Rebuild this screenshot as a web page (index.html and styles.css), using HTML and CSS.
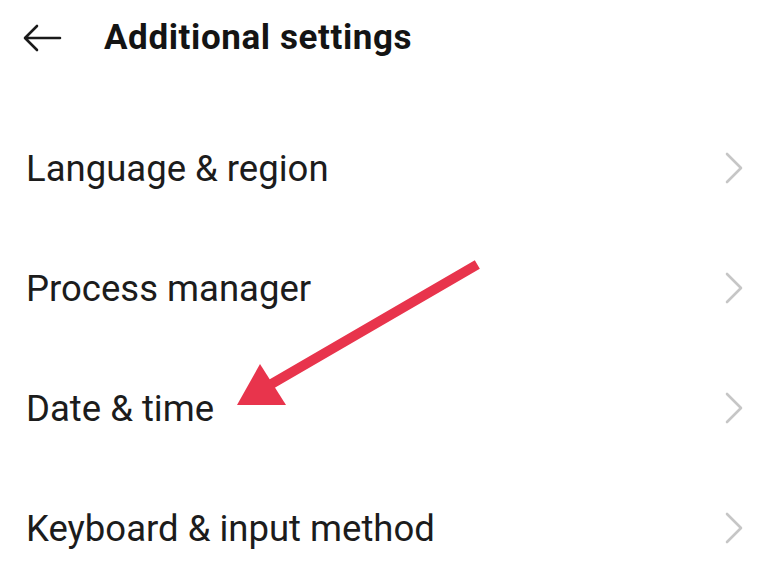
FILE: index.html
```html
<!DOCTYPE html>
<html>
<head>
<meta charset="utf-8">
<link rel="stylesheet" href="styles.css">
</head>
<body>
<div class="screen">
  <header class="topbar">
    <svg class="back" width="40" height="30" viewBox="0 0 40 30">
      <path d="M38 15 H4 M15 3 L3 15 L15 27" fill="none" stroke="#1a1a1a" stroke-width="2.6" stroke-linecap="round" stroke-linejoin="round"/>
    </svg>
    <h1 class="title">Additional settings</h1>
  </header>
  <ul class="list">
    <li class="row"><span class="label">Language &amp; region</span><svg class="chev" width="20" height="32" viewBox="0 0 20 32"><path d="M3 2 L17 16 L3 30" fill="none" stroke="#c6c6c6" stroke-width="2.6" stroke-linecap="round" stroke-linejoin="round"/></svg></li>
    <li class="row"><span class="label">Process manager</span><svg class="chev" width="20" height="32" viewBox="0 0 20 32"><path d="M3 2 L17 16 L3 30" fill="none" stroke="#c6c6c6" stroke-width="2.6" stroke-linecap="round" stroke-linejoin="round"/></svg></li>
    <li class="row"><span class="label">Date &amp; time</span><svg class="chev" width="20" height="32" viewBox="0 0 20 32"><path d="M3 2 L17 16 L3 30" fill="none" stroke="#c6c6c6" stroke-width="2.6" stroke-linecap="round" stroke-linejoin="round"/></svg></li>
    <li class="row"><span class="label">Keyboard &amp; input method</span><svg class="chev" width="20" height="32" viewBox="0 0 20 32"><path d="M3 2 L17 16 L3 30" fill="none" stroke="#c6c6c6" stroke-width="2.6" stroke-linecap="round" stroke-linejoin="round"/></svg></li>
  </ul>
  <svg class="annot" width="768" height="565" viewBox="0 0 768 565">
    <line x1="473" y1="267" x2="268" y2="386" stroke="#e8344c" stroke-width="10" stroke-linecap="square"/>
    <polygon points="260,364 237,405 286,405" fill="#e8344c"/>
  </svg>
</div>
</body>
</html>
```
FILE: styles.css
```css
* { box-sizing: border-box; }
html, body { margin: 0; padding: 0; background: #fff; }
body { font-family: Roboto, "Noto Sans", sans-serif; color: #1a1a1a; }
.screen { position: relative; width: 768px; height: 565px; overflow: hidden; background: #fff; }
.topbar { display: flex; align-items: center; height: 75px; padding-left: 22px; }
.back { flex: none; }
.title { margin: 0 0 0 42px; font-size: 35px; font-weight: 700; letter-spacing: 0.6px; color: #141414; }
.list { list-style: none; margin: 33px 0 0; padding: 0; }
.row { display: flex; align-items: center; justify-content: space-between; height: 120px; padding: 0 24px 0 26px; }
.label { font-size: 36.5px; font-weight: 400; color: #1c1c1c; }
.chev { flex: none; }
.annot { position: absolute; left: 0; top: 0; pointer-events: none; }
```
